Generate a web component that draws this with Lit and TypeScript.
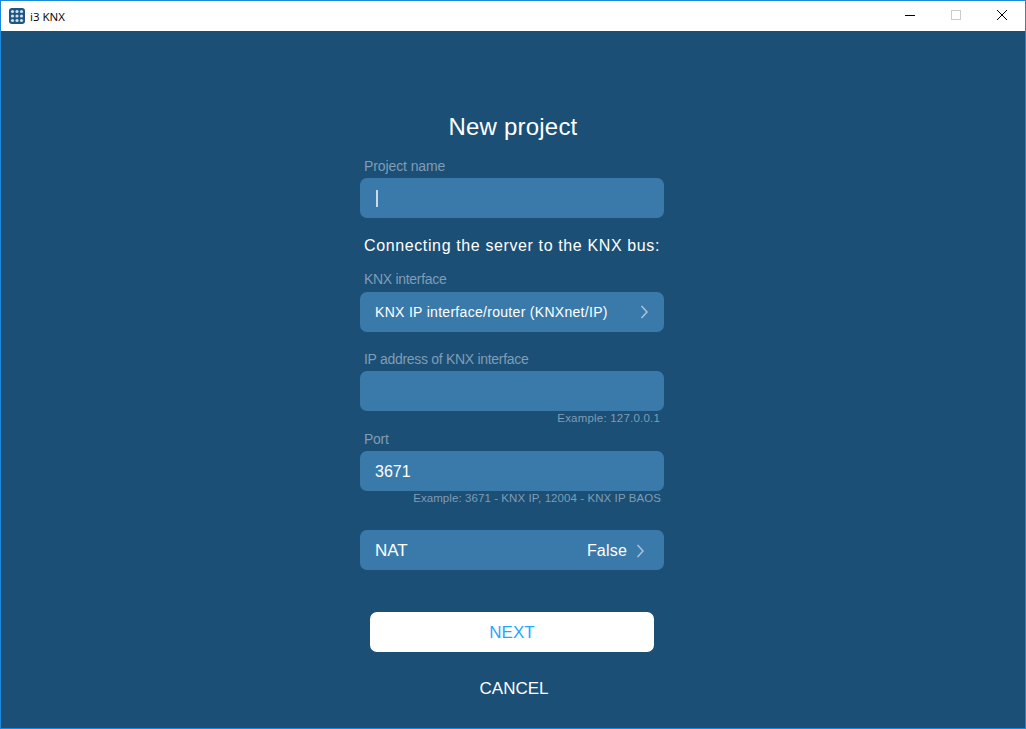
import { LitElement, html, css, svg } from "lit";
import { customElement } from "lit/decorators.js";

const chevron = svg`<path d="M1.5 1 L7 7 L1.5 13" fill="none" stroke="#a9c4da" stroke-width="1.5"/>`;

@customElement("app-root")
export class AppRoot extends LitElement {
  static styles = css`
    :host {
      display: block;
      width: 1026px;
      height: 729px;
      font-family: "Liberation Sans", Arial, sans-serif;
    }
    .window {
      box-sizing: border-box;
      width: 1026px;
      height: 729px;
      border: 1px solid #1b88dc;
      display: flex;
      flex-direction: column;
      background: #1b4f75;
      overflow: hidden;
    }
    .titlebar {
      height: 30px;
      flex: none;
      background: #fff;
      display: flex;
      align-items: center;
    }
    .app-icon {
      margin-left: 8px;
      width: 16px;
      height: 16px;
      flex: none;
    }
    .app-title {
      margin-left: 5px;
      font-size: 11.5px;
      color: #000;
      font-family: "Open Sans", "Liberation Sans", sans-serif;
    }
    .controls {
      margin-left: auto;
      display: flex;
    }
    .ctrl {
      width: 46px;
      height: 30px;
      box-sizing: border-box;
      padding-bottom: 2px;
      display: flex;
      align-items: center;
      justify-content: center;
    }
    .form {
      flex: 1;
      display: flex;
      flex-direction: column;
      align-items: center;
      padding: 81px 2px 0 0;
    }
    .col {
      width: 304px;
      display: flex;
      flex-direction: column;
    }
    h1 {
      margin: 0;
      padding-left: 2px;
      font-size: 24px;
      line-height: 30px;
      font-weight: 400;
      letter-spacing: 0.2px;
      color: #fff;
      text-align: center;
    }
    .label {
      height: 20px;
      line-height: 20px;
      font-size: 14px;
      letter-spacing: -0.3px;
      color: #7f9db5;
      padding-left: 4px;
    }
    .label.wide { letter-spacing: -0.1px; }
    .field {
      height: 40px;
      box-sizing: border-box;
      background: #3a7aaa;
      border-radius: 7px;
      color: #fff;
      font-size: 16px;
      display: flex;
      align-items: center;
      padding: 1px 15px 0;
    }
    .field.small {
      font-size: 14px;
      letter-spacing: 0.3px;
      padding-top: 0;
    }
    .caret {
      width: 2px;
      height: 17px;
      background: #c9dbe8;
      margin-left: 1px;
    }
    .chev {
      width: 9px;
      height: 14px;
      flex: none;
      margin-left: auto;
    }
    .value {
      margin-left: auto;
      letter-spacing: 0.2px;
    }
    .value + .chev { margin-left: 9px; margin-right: 4px; }
    .nat { font-size: 17px; }
    .section {
      height: 20px;
      line-height: 20px;
      font-size: 16px;
      letter-spacing: 0.62px;
      color: #fff;
      padding-left: 4px;
      white-space: nowrap;
    }
    .hint {
      height: 14px;
      line-height: 14px;
      font-size: 11.5px;
      letter-spacing: 0.08px;
      color: #7f9db5;
      text-align: right;
      padding-right: 3px;
      white-space: nowrap;
    }
    .hint.short {
      letter-spacing: 0.2px;
      padding-right: 4px;
    }
    .next {
      width: 284px;
      height: 40px;
      box-sizing: border-box;
      padding-top: 1px;
      align-self: center;
      background: #fff;
      border-radius: 7px;
      color: #1fa8ff;
      font-size: 17px;
      display: flex;
      align-items: center;
      justify-content: center;
    }
    .cancel {
      height: 20px;
      line-height: 22px;
      font-size: 17px;
      padding-left: 4px;
      color: #fff;
      text-align: center;
    }
    .mt-2 { margin-top: 2px; }
    .mt-3 { margin-top: 3px; }
    .mt-4 { margin-top: 4px; }
    .mt-13 { margin-top: 13px; }
    .mt-14 { margin-top: 14px; }
    .mt-17 { margin-top: 17px; }
    .mt-18 { margin-top: 18px; }
    .mt-25 { margin-top: 25px; }
    .mt-26 { margin-top: 26px; }
    .mt-42 { margin-top: 42px; }
  `;

  render() {
    return html`
      <div class="window">
        <div class="titlebar">
          <svg class="app-icon" viewBox="0 0 16 16">
            <rect width="16" height="16" rx="3" fill="#1f5680" />
            ${[3.5, 8, 12.5].flatMap((y) =>
              [3.5, 8, 12.5].map(
                (x) => svg`<circle cx=${x} cy=${y} r="1.6" fill="#cfe0ec" />`
              )
            )}
          </svg>
          <span class="app-title">i3 KNX</span>
          <div class="controls">
            <div class="ctrl">
              <svg width="10" height="10" viewBox="0 0 10 10"><path d="M0 5.5H10" stroke="#000" stroke-width="1" /></svg>
            </div>
            <div class="ctrl">
              <svg width="10" height="10" viewBox="0 0 10 10"><rect x=".5" y=".5" width="9" height="9" fill="none" stroke="#ccc" /></svg>
            </div>
            <div class="ctrl">
              <svg width="12" height="12" viewBox="0 0 12 12"><path d="M1 1L11 11M11 1L1 11" stroke="#000" stroke-width="1" fill="none" /></svg>
            </div>
          </div>
        </div>
        <div class="form">
          <div class="col">
            <h1>New project</h1>
            <div class="label wide mt-14">Project name</div>
            <div class="field mt-2"><span class="caret"></span></div>
            <div class="section mt-18">Connecting the server to the KNX bus:</div>
            <div class="label mt-13">KNX interface</div>
            <div class="field small mt-3">
              <span>KNX IP interface/router (KNXnet/IP)</span>
              <svg class="chev" viewBox="0 0 9 14">${chevron}</svg>
            </div>
            <div class="label mt-17">IP address of KNX interface</div>
            <div class="field mt-2"></div>
            <div class="hint short">Example: 127.0.0.1</div>
            <div class="label mt-4">Port</div>
            <div class="field mt-2">3671</div>
            <div class="hint">Example: 3671 - KNX IP, 12004 - KNX IP BAOS</div>
            <div class="field mt-25">
              <span class="nat">NAT</span>
              <span class="value">False</span>
              <svg class="chev" viewBox="0 0 9 14">${chevron}</svg>
            </div>
            <div class="next mt-42">NEXT</div>
            <div class="cancel mt-26">CANCEL</div>
          </div>
        </div>
      </div>
    `;
  }
}
